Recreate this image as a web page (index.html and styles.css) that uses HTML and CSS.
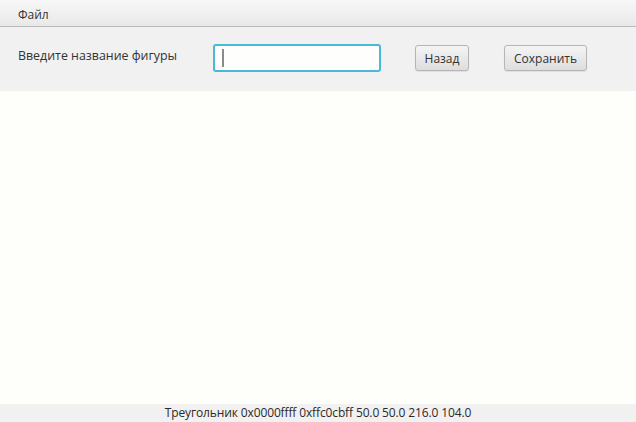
FILE: index.html
```html
<!DOCTYPE html>
<html lang="ru">
<head>
<meta charset="utf-8">
<title>Фигуры</title>
<link rel="stylesheet" href="styles.css">
</head>
<body>
<div class="app">
  <div class="menubar"><span class="menu-item">Файл</span></div>
  <div class="toolbar">
    <span class="label">Введите название фигуры</span>
    <div class="field"><span class="caret"></span></div>
    <button class="btn btn-back">Назад</button>
    <button class="btn btn-save">Сохранить</button>
  </div>
  <div class="canvas"></div>
  <div class="status">Треугольник 0x0000ffff 0xffc0cbff 50.0 50.0 216.0 104.0</div>
</div>
</body>
</html>
```
FILE: styles.css
```css
html, body {
  margin: 0;
  padding: 0;
  width: 636px;
  height: 422px;
  overflow: hidden;
}
body {
  font-family: "Open Sans", "Noto Sans", sans-serif;
  font-size: 12px;
  color: #333;
}
.app {
  display: flex;
  flex-direction: column;
  height: 422px;
}
.menubar {
  height: 27px;
  box-sizing: border-box;
  background: linear-gradient(#f7f7f7, #e9e9e9);
  border-bottom: 1px solid #b9b9b9;
  display: flex;
  align-items: center;
  padding: 2px 0 0 18px;
}
.menu-item {
  color: #333;
}
.toolbar {
  height: 64px;
  box-sizing: border-box;
  background: #f0f1f0;
  display: flex;
  align-items: center;
  padding: 0 0 2px 18px;
}
.label {
  width: 195px;
  margin-top: -6px;
  font-size: 12.4px;
}
.field {
  width: 168px;
  height: 28px;
  box-sizing: border-box;
  border: 2px solid #4ab8d8;
  border-radius: 3px;
  background: #fefefc;
  display: flex;
  align-items: center;
  padding-left: 7px;
}
.caret {
  width: 2px;
  height: 18px;
  background: #8a8a8a;
}
.btn {
  font: inherit;
  color: #333;
  height: 26px;
  box-sizing: border-box;
  border: 1px solid #b6b6b6;
  border-radius: 3px;
  background: linear-gradient(#f4f4f4, #dedede);
  padding: 0 8px;
  box-shadow: 0 1px 1px rgba(0,0,0,0.08);
}
.btn-back {
  margin-left: 34px;
  width: 54px;
}
.btn-save {
  margin-left: 35px;
  width: 83px;
}
.canvas {
  flex: 1;
  background: #fefefa;
}
.status {
  height: 18px;
  background: #f0f1f0;
  text-align: center;
  line-height: 18px;
  font-size: 12px;
  letter-spacing: -0.13px;
  color: #2b2b2b;
}
```
